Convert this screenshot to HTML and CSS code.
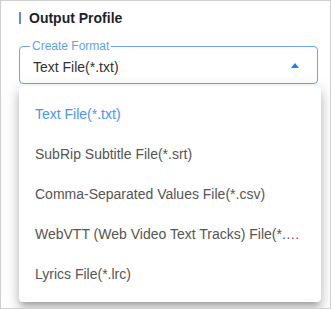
FILE: index.html
```html
<!DOCTYPE html>
<html>
<head>
<meta charset="utf-8">
<link rel="stylesheet" href="styles.css">
</head>
<body>
<div class="panel">
  <div class="title"><span class="bar"></span><span class="title-text">Output Profile</span></div>
  <fieldset class="field">
    <legend class="legend">Create Format</legend>
    <div class="row">
      <span class="value">Text File(*.txt)</span>
      <span class="arrow"></span>
    </div>
  </fieldset>
  <div class="below"></div>
  <ul class="menu">
    <li class="item selected">Text File(*.txt)</li>
    <li class="item">SubRip Subtitle File(*.srt)</li>
    <li class="item">Comma-Separated Values File(*.csv)</li>
    <li class="item">WebVTT (Web Video Text Tracks) File(*.vtt)</li>
    <li class="item">Lyrics File(*.lrc)</li>
  </ul>
</div>
</body>
</html>
```

FILE: styles.css
```css
html, body {
  margin: 0;
  padding: 0;
  background: #ffffff;
}
body {
  font-family: "Liberation Sans", Arial, sans-serif;
}
.panel {
  position: relative;
  box-sizing: border-box;
  width: 331px;
  height: 309px;
  border: 1px solid #cfcfcf;
  padding: 9px 13px 0 18px;
  overflow: hidden;
}
.title {
  display: flex;
  align-items: center;
  height: 16px;
  gap: 8px;
}
.bar {
  width: 2px;
  height: 12px;
  background: #5b8be6;
}
.title-text {
  font-size: 14px;
  font-weight: bold;
  color: #1f1f2a;
  line-height: 16px;
}
.field {
  box-sizing: border-box;
  width: 299px;
  margin: 13px 0 0 0;
  padding: 0;
  border: 1px solid #6ea3f2;
  border-radius: 4px;
}
.legend {
  margin-left: 10px;
  padding: 0 2px;
  font-size: 12px;
  line-height: 14px;
  color: #5f9ff4;
}
.row {
  display: flex;
  align-items: center;
  justify-content: space-between;
  height: 28px;
  padding: 0 18px 2px 13px;
}
.value {
  font-size: 14px;
  color: #333333;
}
.arrow {
  width: 0;
  height: 0;
  border-left: 4.5px solid transparent;
  border-right: 4.5px solid transparent;
  border-bottom: 5px solid #1f80ec;
  margin-bottom: 3px;
}
.below {
  box-sizing: border-box;
  width: 299px;
  height: 40px;
  margin-top: 4px;
  border: 1px solid #d8d8d8;
  border-radius: 4px;
}
.menu {
  position: absolute;
  left: 18px;
  top: 85px;
  width: 302px;
  margin: 0;
  padding: 8px 0;
  list-style: none;
  background: #ffffff;
  border-radius: 4px;
  box-shadow: 0 5px 5px -3px rgba(0,0,0,0.2), 0 8px 10px 1px rgba(0,0,0,0.14), 0 3px 14px 2px rgba(0,0,0,0.12);
}
.item {
  box-sizing: border-box;
  height: 40px;
  line-height: 40px;
  padding: 0 18px 0 16px;
  font-size: 14px;
  color: #555555;
  white-space: nowrap;
  overflow: hidden;
  text-overflow: ellipsis;
}
.item.selected {
  color: #4d94f0;
}
```
